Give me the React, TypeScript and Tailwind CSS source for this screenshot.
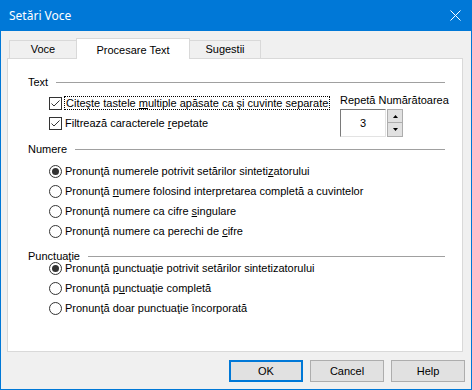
import React from "react";

function Header({ label }: { label: string }) {
  return (
    <div className="flex h-[12px] items-center">
      <span className="leading-[12px]">{label}</span>
      <div className="ml-[8px] flex-1 border-t border-[#a0a0a0]" />
    </div>
  );
}

function CheckBox() {
  return (
    <span className="flex h-[13px] w-[13px] shrink-0 items-center justify-center border border-[#333333] bg-white">
      <svg width="11" height="11" viewBox="0 0 11 11">
        <path d="M1.5 5.5 L4 8 L9.5 2.5" fill="none" stroke="#333333" strokeWidth="1" />
      </svg>
    </span>
  );
}

function Radio({ on }: { on?: boolean }) {
  return (
    <span className="flex h-[13px] w-[13px] shrink-0 items-center justify-center rounded-full border border-[#333333] bg-white">
      {on && <span className="h-[7px] w-[7px] rounded-full bg-[#333333]" />}
    </span>
  );
}

function Row({ children, box }: { children: React.ReactNode; box: React.ReactNode }) {
  return (
    <div className="flex h-[12px] items-center">
      {box}
      <span className="ml-[3px] whitespace-nowrap leading-[12px]">{children}</span>
    </div>
  );
}

const U = ({ c }: { c: string }) => <span className="underline underline-offset-[1px]">{c}</span>;

export default function App() {
  return (
    <div className="flex h-[390px] w-[472px] flex-col border-x border-b border-[#0078d7] bg-[#f0f0f0] font-['Liberation_Sans',Arial,sans-serif] text-[11px] text-black">
      <div className="flex h-[31px] shrink-0 items-center justify-between bg-[#0078d7] pl-[8px] pr-[10px] text-[12px] text-white">
        <span className="font-['Noto_Sans',sans-serif]">Setări Voce</span>
        <svg width="11" height="11" viewBox="0 0 11 11">
          <path d="M0.5 0.5 L10.5 10.5 M10.5 0.5 L0.5 10.5" stroke="#ffffff" strokeWidth="1" />
        </svg>
      </div>

      <div className="pl-[6px]">
        <div className="mt-[7px] flex h-[20px] items-end pl-[2px]">
          <div className="flex h-[18px] w-[68px] items-center justify-center border border-b-0 border-[#d9d9d9] bg-[#f0f0f0]">
            Voce
          </div>
          <div className="relative z-10 -mb-px -ml-px flex h-[21px] w-[114px] items-start justify-center border border-b-0 border-[#d9d9d9] bg-white pt-[3px]">
            Procesare Text
          </div>
          <div className="-ml-px flex h-[18px] w-[72px] items-center justify-center border border-b-0 border-[#d9d9d9] bg-[#f0f0f0]">
            Sugestii
          </div>
        </div>

        <div className="h-[294px] w-[456px] border border-[#d9d9d9] bg-white pl-[20px] pr-[17px]">
          <div className="mt-[17px]">
            <Header label="Text" />
          </div>
          <div className="flex">
            <div className="flex flex-1 flex-col gap-[8px] pl-[21px] pt-[9px]">
              <div className="flex h-[12px] items-center">
                <CheckBox />
                <span className="ml-[2px] whitespace-nowrap border border-dotted border-black px-px leading-[12px]">
                  Citeşte tastele <U c="m" />ultiple apăsate ca şi cuvinte separate
                </span>
              </div>
              <Row box={<CheckBox />}>
                Filtrează caracterele <U c="r" />epetate
              </Row>
            </div>
            <div className="flex w-[105px] flex-col pt-[6px]">
              <span className="h-[12px] whitespace-nowrap leading-[12px]">Repetă Numărătoarea</span>
              <div className="mt-[3px] flex items-start">
                <div className="flex h-[28px] w-[46px] items-center justify-center border-y border-l border-r border-b-[#e3e3e3] border-l-[#7a7a7a] border-r-[#e3e3e3] border-t-[#7a7a7a]">
                  3
                </div>
                <div className="ml-[1px] flex flex-col">
                  <div className="flex h-[14px] w-[16px] items-center justify-center border border-[#adadad] bg-[#e1e1e1]">
                    <svg width="5" height="3" viewBox="0 0 5 3">
                      <path d="M2.5 0 L5 3 L0 3 Z" fill="#000" />
                    </svg>
                  </div>
                  <div className="-mt-px flex h-[15px] w-[16px] items-center justify-center border border-[#adadad] bg-[#e1e1e1]">
                    <svg width="5" height="3" viewBox="0 0 5 3">
                      <path d="M0 0 L5 0 L2.5 3 Z" fill="#000" />
                    </svg>
                  </div>
                </div>
              </div>
            </div>
          </div>

          <div className="mt-[6px]">
            <Header label="Numere" />
          </div>
          <div className="mt-[10px] flex flex-col gap-[8px] pl-[21px]">
            <Row box={<Radio on />}>
              Pronunţă numerele potrivit setărilor sinteti<U c="z" />atorului
            </Row>
            <Row box={<Radio />}>
              Pronunţă <U c="n" />umere folosind interpretarea completă a cuvintelor
            </Row>
            <Row box={<Radio />}>
              Pronunţă numere ca cifre <U c="s" />ingulare
            </Row>
            <Row box={<Radio />}>
              Pronunţă numere ca perechi de <U c="c" />ifre
            </Row>
          </div>

          <div className="mt-[13px]">
            <Header label="Punctuaţie" />
          </div>
          <div className="flex flex-col gap-[8px] pl-[21px]">
            <Row box={<Radio on />}>
              Pronunţă <U c="p" />unctuaţie potrivit setărilor sintetizatorului
            </Row>
            <Row box={<Radio />}>
              Pronunţă p<U c="u" />nctuaţie completă
            </Row>
            <Row box={<Radio />}>Pronunţă doar punctuaţie încorporată</Row>
          </div>
        </div>
      </div>

      <div className="mt-[8px] flex justify-end gap-[7px] pr-[6px]">
        <button className="flex h-[22px] w-[74px] items-center justify-center border-2 border-[#0078d7] bg-[#e1e1e1]">
          OK
        </button>
        <button className="flex h-[22px] w-[74px] items-center justify-center border border-[#adadad] bg-[#e1e1e1]">
          Cancel
        </button>
        <button className="flex h-[22px] w-[74px] items-center justify-center border border-[#adadad] bg-[#e1e1e1]">
          Help
        </button>
      </div>
    </div>
  );
}
